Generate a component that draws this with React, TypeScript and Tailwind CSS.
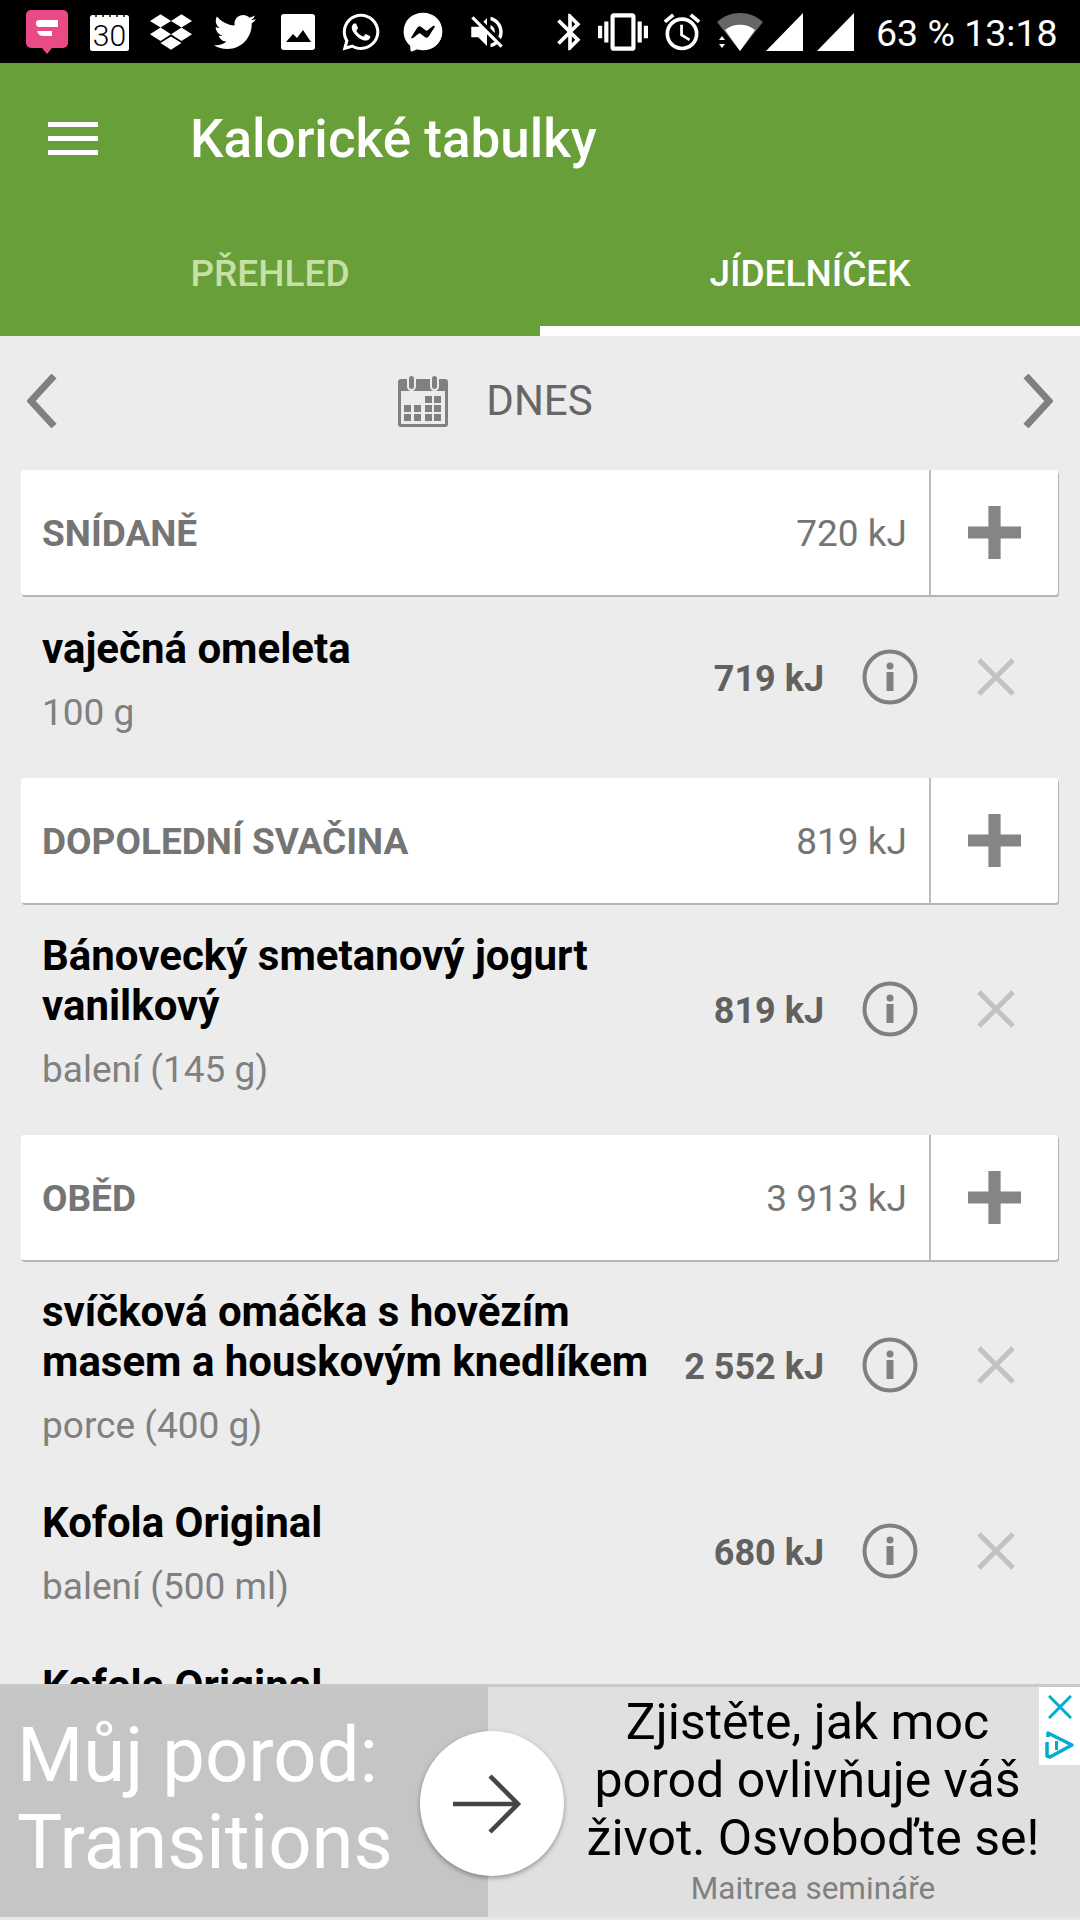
import { FaDropbox, FaFacebookMessenger, FaTwitter, FaWhatsapp } from "react-icons/fa";
import { MdAccessAlarm, MdBluetooth, MdVibration, MdVolumeOff } from "react-icons/md";

function MessageBadge() {
  return (
    <svg width="42" height="44" viewBox="0 0 42 44">
      <path d="M5 0h32a5 5 0 0 1 5 5v28a5 5 0 0 1-5 5H26l-5 6-5-6H5a5 5 0 0 1-5-5V5a5 5 0 0 1 5-5z" fill="#ea4a85" />
      <path d="M13 10h19v7H14a3.500 3.500 0 0 1-1-7zM11 21h15v5H17c-3 0-5-2-6-5z" fill="#fff" />
    </svg>
  );
}

function CalendarDay() {
  return (
    <svg width="39" height="38" viewBox="0 0 39 38">
      <rect x="0" y="2" width="39" height="36" rx="2.500" fill="#fff" />
      <path d="M6 0v4M13 0v4M20 0v4M27 0v4M34 0v4" stroke="#000" strokeWidth="1.500" />
      <text x="19.500" y="33" textAnchor="middle" fontFamily="Roboto" fontSize="30" fontWeight="300" fill="#000">30</text>
    </svg>
  );
}

function GalleryIcon() {
  return (
    <svg width="34" height="36" viewBox="0 0 34 36">
      <rect width="34" height="36" rx="3" fill="#fff" />
      <path d="M5 28l7-8 4 4 6-8 8 12z" fill="#000" />
    </svg>
  );
}

function WifiIcon() {
  return (
    <svg width="46" height="38" viewBox="0 0 46 38">
      <path d="M0 9C13-3 33-3 46 9L23 38z" fill="#666" />
      <path d="M8 17C16 10 30 10 38 17L23 38z" fill="#fff" />
      <path d="M2 27l3-4 3 4zM2 31h6l-3 4z" fill="#fff" />
    </svg>
  );
}

function SignalIcon() {
  return (
    <svg width="37" height="38" viewBox="0 0 37 38">
      <path d="M37 0v38H0z" fill="#fff" />
    </svg>
  );
}

function Hamburger() {
  return (
    <div className="flex h-[33px] w-[50px] flex-col justify-between">
      <div className="h-[5px] bg-white" />
      <div className="h-[5px] bg-white" />
      <div className="h-[5px] bg-white" />
    </div>
  );
}

function Chevron({ flip }: { flip?: boolean }) {
  return (
    <svg width="30" height="54" viewBox="0 0 30 54">
      <path d={flip ? "M3 2l23 25L3 52" : "M27 2L4 27l23 25"} fill="none" stroke="#808080" strokeWidth="7" />
    </svg>
  );
}

function DateIcon() {
  const cells = [
    [28, 21], [37, 21],
    [7, 30], [17, 30], [28, 30], [37, 30],
    [7, 39], [17, 39], [28, 39], [37, 39],
  ];
  return (
    <svg width="52" height="52" viewBox="0 0 52 52">
      <rect x="1" y="4" width="50" height="48" rx="3" fill="#808080" />
      <rect x="4" y="16" width="44" height="33" fill="#ececec" />
      <rect x="11" y="0" width="7" height="15" rx="3.500" fill="#808080" stroke="#ececec" strokeWidth="2" />
      <rect x="34" y="0" width="7" height="15" rx="3.500" fill="#808080" stroke="#ececec" strokeWidth="2" />
      {cells.map(([x, y]) => (
        <rect key={`${x}-${y}`} x={x} y={y} width="7" height="7" fill="#808080" />
      ))}
    </svg>
  );
}

function MealHeader({ name, energy }: { name: string; energy: string }) {
  return (
    <div className="mx-[21px] flex h-[125px] w-[1037px] items-stretch rounded-[3px] bg-white shadow-[1px_2px_0_#b4b4b4]">
      <div className="flex flex-1 items-center justify-between pr-[22px] pl-[21px] text-[#757575]">
        <span className="pt-[2px] text-[37px] font-bold">{name}</span>
        <span className="pt-[2px] text-[37px]">{energy}</span>
      </div>
      <div className="flex w-[129px] items-center justify-center border-l-2 border-[#bdbdbd]">
        <svg width="53" height="53" viewBox="0 0 52 52">
          <path d="M20 0h12v20h20v12H32v20H20V32H0V20h20z" fill="#858585" />
        </svg>
      </div>
    </div>
  );
}

function InfoIcon() {
  return (
    <svg width="56" height="56" viewBox="0 0 56 56">
      <circle cx="28" cy="28" r="25.500" fill="none" stroke="#808080" strokeWidth="4" />
      <circle cx="28" cy="17" r="3.500" fill="#808080" />
      <rect x="24.500" y="23" width="7" height="19" fill="#808080" />
    </svg>
  );
}

function RemoveIcon() {
  return (
    <svg width="38" height="38" viewBox="0 0 38 38">
      <path d="M2 2l34 34M36 2L2 36" stroke="#c2c2c2" strokeWidth="5" />
    </svg>
  );
}

function FoodRow({ name, amount, energy, height = "h-[163px]", gap = "" }: { name: string[]; amount: string; energy: string; height?: string; gap?: string }) {
  return (
    <div className={`flex items-center pr-[65px] pl-[42px] ${height} ${gap}`}>
      <div className="w-[620px] shrink-0 pt-[3px]">
        <div className="text-[42px] leading-[50px] font-bold text-black">
          {name.map((line) => (
            <div key={line} className="whitespace-nowrap">{line}</div>
          ))}
        </div>
        <div className="mt-[19px] text-[37px] leading-[40px] text-[#808080]">{amount}</div>
      </div>
      <div className="flex-1 pt-[4px] text-right text-[36px] font-bold whitespace-nowrap text-[#616161]">{energy}</div>
      <div className="ml-[38px]"><InfoIcon /></div>
      <div className="ml-[59px]"><RemoveIcon /></div>
    </div>
  );
}

export default function App() {
  return (
    <div className="flex h-[1920px] w-[1080px] flex-col overflow-hidden bg-[#ececec] font-[family-name:Roboto,sans-serif]">
      {/* status bar */}
      <div className="flex h-[63px] shrink-0 items-center bg-black pl-[26px] text-white">
        <MessageBadge />
        <div className="ml-[22px]"><CalendarDay /></div>
        <FaDropbox className="ml-[21px]" size={42} />
        <FaTwitter className="ml-[22px]" size={42} />
        <div className="ml-[25px]"><GalleryIcon /></div>
        <FaWhatsapp className="ml-[25px]" size={42} />
        <FaFacebookMessenger className="ml-[21px]" size={40} />
        <MdVolumeOff className="ml-[23px]" size={42} />
        <MdBluetooth className="ml-[40px]" size={44} />
        <MdVibration className="ml-[6px]" size={50} />
        <MdAccessAlarm className="ml-[12px]" size={44} />
        <div className="ml-[13px]"><WifiIcon /></div>
        <div className="ml-[3px]"><SignalIcon /></div>
        <div className="ml-[14px]"><SignalIcon /></div>
        <span className="ml-[22px] pt-[4px] text-[37.500px] whitespace-nowrap">63 % 13:18</span>
      </div>

      {/* app bar */}
      <div className="flex h-[273px] shrink-0 flex-col bg-[#689f38]">
        <div className="flex h-[150px] items-center pl-[48px]">
          <Hamburger />
          <span className="ml-[92px] pt-[4px] text-[53px] font-medium text-white">Kalorické tabulky</span>
        </div>
        <div className="flex flex-1">
          <div className="flex w-[540px] items-center justify-center border-b-[10px] border-transparent pt-[9px] text-[37px] font-medium text-[#c5e1a5]">PŘEHLED</div>
          <div className="flex w-[540px] items-center justify-center border-b-[10px] border-white pt-[9px] text-[37px] font-medium text-white">JÍDELNÍČEK</div>
        </div>
      </div>

      {/* day switcher */}
      <div className="flex h-[134px] shrink-0 items-center justify-between px-[27px] pb-[5px]">
        <Chevron />
        <div className="flex items-center pr-[90px]">
          <DateIcon />
          <span className="ml-[37px] text-[42px] text-[#666666]">DNES</span>
        </div>
        <Chevron flip />
      </div>

      {/* meals */}
      <div className="min-h-0 flex-1 overflow-hidden">
        <MealHeader name="SNÍDANĚ" energy="720 kJ" />
        <FoodRow name={["vaječná omeleta"]} amount="100 g" energy="719 kJ" gap="mb-[20px]" />
        <MealHeader name="DOPOLEDNÍ SVAČINA" energy="819 kJ" />
        <FoodRow name={["Bánovecký smetanový jogurt", "vanilkový"]} amount="balení (145 g)" energy="819 kJ" height="h-[212px]" gap="mb-[20px]" />
        <MealHeader name="OBĚD" energy="3 913 kJ" />
        <FoodRow name={["svíčková omáčka s hovězím", "masem a houskovým knedlíkem"]} amount="porce (400 g)" energy="2 552 kJ" height="h-[209px]" />
        <FoodRow name={["Kofola Original"]} amount="balení (500 ml)" energy="680 kJ" />
        <FoodRow name={["Kofola Original"]} amount="balení (500 ml)" energy="680 kJ" />
      </div>

      {/* advertisement */}
      <div className="relative flex h-[236px] shrink-0 border-t-[3px] border-b-[3px] border-t-[#c9c9c9] border-b-[#e8e8e8] bg-[#e0e0e0]">
        <div className="w-[488px] bg-[#c5c5c5] pt-[25px] pl-[17px] text-[76px] leading-[87px] whitespace-nowrap text-white">
          <div>Můj porod:</div>
          <div>Transitions</div>
        </div>
        <div className="flex flex-1 flex-col items-center pt-[6px] pl-[58px] text-center">
          <div className="text-[50px] leading-[58px] whitespace-nowrap text-black">
            <div className="pr-[11px]">Zjistěte, jak moc</div>
            <div className="pr-[11px]">porod ovlivňuje váš</div>
            <div>život. Osvoboďte se!</div>
          </div>
          <div className="mt-[2px] text-[31.500px] leading-[40px] text-[#808080]">Maitrea semináře</div>
        </div>
        <div className="absolute top-[44px] left-[420px] flex h-[145px] w-[144px] items-center justify-center rounded-full bg-white shadow-[0_2px_5px_rgba(0,0,0,0.35)]">
          <svg className="mr-[10px]" width="70" height="60" viewBox="0 0 70 60">
            <path d="M1 30h66M38 2l28 28-28 28" fill="none" stroke="#454545" strokeWidth="4.500" />
          </svg>
        </div>
        <div className="absolute top-0 right-0 flex h-[78px] w-[41px] flex-col items-center gap-[11px] bg-white pt-[8px]">
          <svg width="24" height="24" viewBox="0 0 24 24">
            <path d="M1 1l22 22M23 1L1 23" stroke="#00aecd" strokeWidth="3" />
          </svg>
          <svg width="31" height="30" viewBox="0 0 31 30">
            <path d="M4 7V3l24 12L6 27l-3-1V12" fill="none" stroke="#00aecd" strokeWidth="3.500" strokeLinejoin="round" />
            <rect x="11" y="11" width="3" height="9" fill="#00aecd" />
            <rect x="11" y="6" width="3" height="3" fill="#00aecd" />
          </svg>
        </div>
      </div>
    </div>
  );
}
